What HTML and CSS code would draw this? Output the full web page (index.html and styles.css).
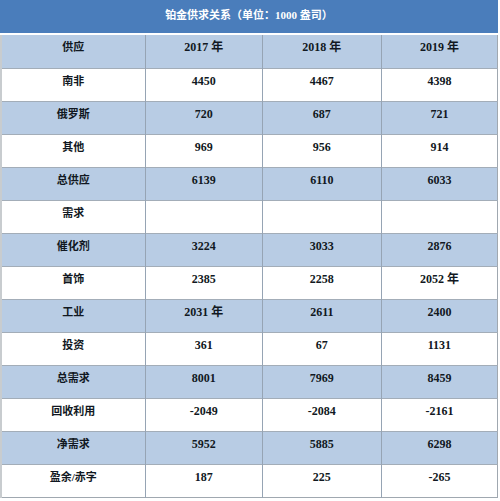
FILE: index.html
```html
<!DOCTYPE html>
<html lang="zh">
<head>
<meta charset="utf-8">
<link rel="stylesheet" href="styles.css">
</head>
<body>
<div class="sheet">
  <div class="title">铂金供求关系（单位：1000 盎司）</div>
  <table class="grid">
    <colgroup>
      <col class="c1"><col class="c2"><col class="c3"><col class="c4">
    </colgroup>
    <tbody>
      <tr class="blue"><td>供应</td><td>2017 年</td><td>2018 年</td><td>2019 年</td></tr>
      <tr><td>南非</td><td>4450</td><td>4467</td><td>4398</td></tr>
      <tr class="blue"><td>俄罗斯</td><td>720</td><td>687</td><td>721</td></tr>
      <tr><td>其他</td><td>969</td><td>956</td><td>914</td></tr>
      <tr class="blue"><td>总供应</td><td>6139</td><td>6110</td><td>6033</td></tr>
      <tr><td>需求</td><td></td><td></td><td></td></tr>
      <tr class="blue"><td>催化剂</td><td>3224</td><td>3033</td><td>2876</td></tr>
      <tr><td>首饰</td><td>2385</td><td>2258</td><td>2052 年</td></tr>
      <tr class="blue"><td>工业</td><td>2031 年</td><td>2611</td><td>2400</td></tr>
      <tr><td>投资</td><td>361</td><td>67</td><td>1131</td></tr>
      <tr class="blue"><td>总需求</td><td>8001</td><td>7969</td><td>8459</td></tr>
      <tr><td>回收利用</td><td>-2049</td><td>-2084</td><td>-2161</td></tr>
      <tr class="blue"><td>净需求</td><td>5952</td><td>5885</td><td>6298</td></tr>
      <tr><td>盈余/赤字</td><td>187</td><td>225</td><td>-265</td></tr>
    </tbody>
  </table>
</div>
</body>
</html>
```

FILE: styles.css
```css
html, body {
  margin: 0;
  padding: 0;
  background: #ffffff;
}

.sheet {
  width: 498px;
  font-family: "Liberation Serif", "Noto Sans CJK SC", serif;
  color: #111822;
}

.title {
  height: 33px;
  line-height: 31px;
  background: #4a7dbb;
  color: #ffffff;
  font-size: 11px;
  font-weight: bold;
  text-align: center;
  margin-bottom: 2px;
}

.grid {
  width: 498px;
  border-collapse: collapse;
  table-layout: fixed;
  border-left: 2px solid #c8cccf;
  border-bottom: 1px solid #a0a8b0;
  border-right: 1px solid #a0a8b0;
}

.c1 { width: 144px; }
.c2 { width: 117px; }
.c3 { width: 119px; }
.c4 { width: 116px; }

.grid td {
  height: 33px;
  padding: 0 0 8px 0;
  box-sizing: border-box;
  border-left: 1px solid #96a4b4;
  border-top: 1px solid #a3adb8;
  text-align: center;
  vertical-align: middle;
  font-size: 12px;
  font-weight: bold;
  line-height: 14px;
}

.grid td:first-child {
  font-size: 11px;
}

.grid tr:first-child td {
  border-top: none;
}

.grid tr td:first-child {
  border-left: none;
}

.grid tr.blue td {
  background: #b8cce4;
}
```
